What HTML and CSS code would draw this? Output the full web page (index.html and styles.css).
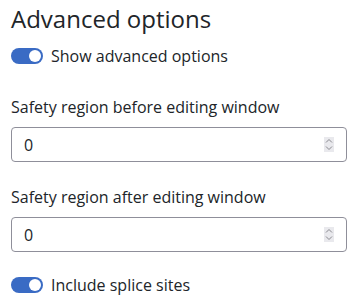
FILE: index.html
```html
<!DOCTYPE html>
<html lang="en">
  <head>
    <meta charset="UTF-8" />
    <meta name="viewport" content="width=device-width, initial-scale=1.0" />
    <title>Advanced options</title>
    <link rel="stylesheet" href="styles.css">
  </head>
  <body>
    <div class="painel">
      <h2 class="titulo">Advanced options</h2>

      <label class="chave">
        <span class="trilho"><span class="bolinha"></span></span>
        <span>Show advanced options</span>
      </label>

      <div class="campo">
        <label class="rotulo">Safety region before editing window</label>
        <div class="caixa">
          <input type="text" value="0" />
          <span class="setas">
            <svg width="8" height="13" viewBox="0 0 8 13"><path d="M1 4.5 L4 1.5 L7 4.5 M1 8.5 L4 11.5 L7 8.5" fill="none" stroke="#8a8a90" stroke-width="1"/></svg>
          </span>
        </div>
      </div>

      <div class="campo">
        <label class="rotulo">Safety region after editing window</label>
        <div class="caixa">
          <input type="text" value="0" />
          <span class="setas">
            <svg width="8" height="13" viewBox="0 0 8 13"><path d="M1 4.5 L4 1.5 L7 4.5 M1 8.5 L4 11.5 L7 8.5" fill="none" stroke="#8a8a90" stroke-width="1"/></svg>
          </span>
        </div>
      </div>

      <label class="chave">
        <span class="trilho"><span class="bolinha"></span></span>
        <span>Include splice sites</span>
      </label>
    </div>
  </body>
</html>
```

FILE: styles.css
```css
body {
  margin: 0;
  background: #fff;
  color: #212529;
  font-family: "Open Sans", "Noto Sans", sans-serif;
  font-size: 16px;
  line-height: 24px;
}

.painel {
  padding: 0 12px 0 11px;
}

.titulo {
  margin: 0;
  padding-top: 3px;
  font-size: 24px;
  font-weight: 400;
  line-height: 32px;
}

.chave {
  display: flex;
  align-items: center;
  gap: 8px;
  margin-top: 9px;
}

.trilho {
  width: 32px;
  height: 16px;
  border-radius: 8px;
  background: #3a6bc4;
  display: flex;
  align-items: center;
  justify-content: flex-end;
  padding: 0 2px;
  box-sizing: border-box;
}

.bolinha {
  width: 12px;
  height: 12px;
  border-radius: 50%;
  background: #fff;
}

.campo {
  margin-top: 27px;
}

.campo + .campo {
  margin-top: 23px;
}

.rotulo {
  display: block;
  margin-bottom: 8px;
}

.caixa {
  display: flex;
  align-items: center;
  height: 35px;
  border: 1px solid #8f8f9a;
  border-radius: 4px;
  box-sizing: border-box;
  padding: 0 12px 0 12px;
}

.caixa input {
  flex: 1;
  border: none;
  outline: none;
  padding: 0;
  font: inherit;
  color: #212529;
  background: transparent;
  min-width: 0;
}

.setas {
  width: 10px;
  height: 15px;
  background: #e9e9ed;
  display: flex;
  align-items: center;
  justify-content: center;
}

.campo + .chave {
  margin-top: 21px;
}
```
